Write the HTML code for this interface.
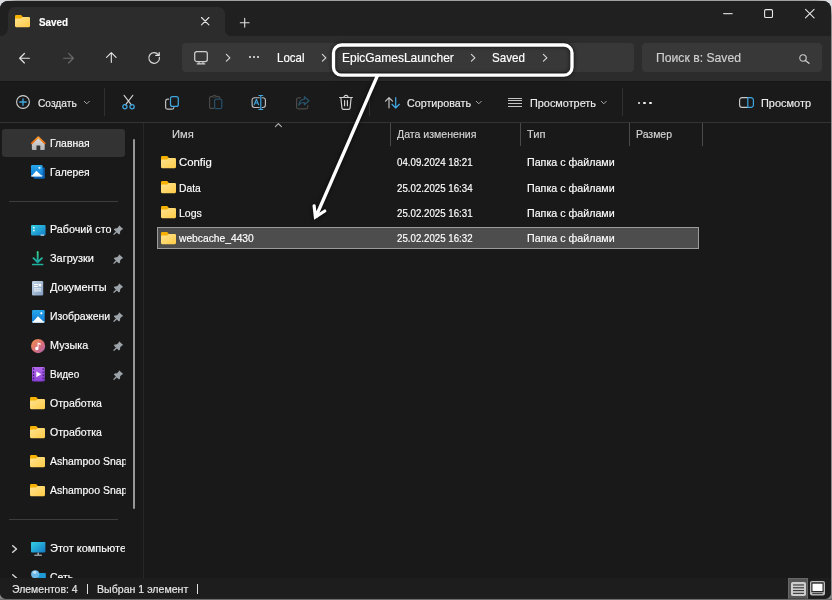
<!DOCTYPE html>
<html lang="ru">
<head>
<meta charset="utf-8">
<title>Saved</title>
<style>
*{margin:0;padding:0;box-sizing:border-box}
html,body{width:832px;height:600px;overflow:hidden;background:#8c8c8c}
body{font-family:"Liberation Sans",sans-serif;font-size:12px;color:#fff;position:relative}
#bg{position:absolute;left:0;top:0;width:832px;height:600px;background:radial-gradient(circle at 0 0,#dcdee1 0,#dcdee1 5px,rgba(220,222,225,0) 16px),radial-gradient(circle at 832px 0,#dcdee1 0,#dcdee1 5px,rgba(220,222,225,0) 16px),linear-gradient(#a0a0a0,#a0a0a0 1px,#8a8a8a 2px,#8a8a8a 598px,#6c6c6c 599px)}
#win{position:absolute;left:0;top:0;width:831px;height:599px;background:#191919;clip-path:inset(1px 0 0.200px 0 round 8px 8px 6px 6px)}
#titlebar{position:absolute;left:0;top:0;width:832px;height:36px;background:#202020}
#tab{position:absolute;left:7.700px;top:7.400px;width:217px;height:28.600px;background:#2c2c2c;border-radius:7px 7px 0 0}
#navrow{position:absolute;left:0;top:36px;width:832px;height:44.500px;background:#2c2c2c}
#addr{position:absolute;left:181.800px;top:43.300px;width:452.200px;height:29px;background:#383838;border-radius:4px}
#search{position:absolute;left:642px;top:43.300px;width:179.700px;height:29px;background:#383838;border-radius:4px}
#cmdbar{position:absolute;left:0;top:80.500px;width:832px;height:42px;background:#1a1a1a;border-top:1px solid #171717}
#hline{position:absolute;left:0;top:122px;width:832px;height:1px;background:#333}
#status{position:absolute;left:0;top:578.400px;width:832px;height:21px;background:#1d1d1d;z-index:5}
#navsel{position:absolute;left:2px;top:129px;width:123.300px;height:28px;background:#333;border-radius:3px}
#rowsel{position:absolute;left:157px;top:227px;width:542px;height:22px;background:#4d4d4d;border:1px solid #9b9b9b}
.t{position:absolute;white-space:nowrap;line-height:16px;height:16px;transform-origin:0 0;-webkit-text-stroke:0.180px}
.sep{position:absolute;width:1px;background:#303030}
.b{position:absolute}
svg{position:absolute;overflow:visible}
</style>
</head>
<body>
<div id="bg"></div>
<div id="win">
<div id="titlebar"></div>
<div id="tab"></div>
<svg style="left:0;top:28px" width="8" height="8" viewBox="0 0 8 8"><path d="M8 0v8H0a8 8 0 0 0 8-8z" fill="#2c2c2c"/></svg>
<svg style="left:225px;top:30px" width="6" height="6" viewBox="0 0 6 6"><path d="M0 0v6h6a6 6 0 0 1-6-6z" fill="#2c2c2c"/></svg>
<div id="navrow"></div>
<div id="addr"></div>
<div id="search"></div>
<div id="cmdbar"></div>
<div id="hline"></div>
<div id="navsel"></div>
<div id="rowsel"></div>
<div id="status"></div>
<div class="sep" style="left:104px;top:88px;height:28px"></div>
<div class="sep" style="left:369px;top:88px;height:28px"></div>
<div class="sep" style="left:622px;top:88px;height:28px"></div>
<div class="sep" style="left:390px;top:123px;height:23px;background:#4a4a4a"></div>
<div class="sep" style="left:520px;top:123px;height:23px;background:#4a4a4a"></div>
<div class="sep" style="left:629px;top:123px;height:23px;background:#4a4a4a"></div>
<div class="sep" style="left:702px;top:123px;height:23px;background:#4a4a4a"></div>
<div class="b" style="left:142.600px;top:123px;width:1.400px;height:456px;background:#272727"></div>
<div class="b" style="left:9px;top:201px;width:109px;height:1px;background:#3d3d3d"></div>
<div class="b" style="left:9px;top:519px;width:109px;height:1px;background:#3d3d3d"></div>
<div class="b" style="left:133px;top:139px;width:2.300px;height:369.500px;background:#969696;border-radius:1px"></div>
<div class="t" style="left:39.00px;top:13.50px;font-size:11.75px;transform:scaleX(0.8375);color:#fff;font-weight:bold;">Saved</div>
<div class="t" style="left:276.75px;top:50.00px;font-size:12.75px;transform:scaleX(0.9016);color:#fff;">Local</div>
<div class="t" style="left:342.20px;top:50.00px;font-size:12.75px;transform:scaleX(0.9390);color:#fff;">EpicGamesLauncher</div>
<div class="t" style="left:491.50px;top:50.00px;font-size:12.75px;transform:scaleX(0.9080);color:#fff;">Saved</div>
<div class="t" style="left:655.75px;top:50.00px;font-size:12.75px;transform:scaleX(0.9564);color:#cfcfcf;">Поиск в: Saved</div>
<div class="t" style="left:38.00px;top:95.00px;font-size:11.75px;transform:scaleX(0.8671);color:#ececec;">Создать</div>
<div class="t" style="left:406.50px;top:95.00px;font-size:11.75px;transform:scaleX(0.9118);color:#ececec;">Сортировать</div>
<div class="t" style="left:529.50px;top:95.00px;font-size:11.75px;transform:scaleX(0.9255);color:#ececec;">Просмотреть</div>
<div class="t" style="left:760.75px;top:95.00px;font-size:11.75px;transform:scaleX(0.9313);color:#ececec;">Просмотр</div>
<div class="t" style="left:172.00px;top:126.00px;font-size:11.75px;transform:scaleX(0.9508);color:#d4d4d4;">Имя</div>
<div class="t" style="left:396.50px;top:126.00px;font-size:11.75px;transform:scaleX(0.8991);color:#d4d4d4;">Дата изменения</div>
<div class="t" style="left:527.20px;top:126.00px;font-size:11.75px;transform:scaleX(0.9457);color:#d4d4d4;">Тип</div>
<div class="t" style="left:635.75px;top:126.00px;font-size:11.75px;transform:scaleX(0.8916);color:#d4d4d4;">Размер</div>
<div class="t" style="left:179.00px;top:154.00px;font-size:11.75px;transform:scaleX(0.9665);color:#fff;">Config</div>
<div class="t" style="left:396.50px;top:154.00px;font-size:11.75px;transform:scaleX(0.8262);color:#fff;">04.09.2024 18:21</div>
<div class="t" style="left:527.20px;top:154.00px;font-size:11.75px;transform:scaleX(0.9088);color:#fff;">Папка с файлами</div>
<div class="t" style="left:179.00px;top:180.00px;font-size:11.75px;transform:scaleX(0.8764);color:#fff;">Data</div>
<div class="t" style="left:396.50px;top:180.00px;font-size:11.75px;transform:scaleX(0.8262);color:#fff;">25.02.2025 16:34</div>
<div class="t" style="left:527.20px;top:180.00px;font-size:11.75px;transform:scaleX(0.9088);color:#fff;">Папка с файлами</div>
<div class="t" style="left:179.00px;top:205.00px;font-size:11.75px;transform:scaleX(0.8980);color:#fff;">Logs</div>
<div class="t" style="left:396.50px;top:205.00px;font-size:11.75px;transform:scaleX(0.8262);color:#fff;">25.02.2025 16:31</div>
<div class="t" style="left:527.20px;top:205.00px;font-size:11.75px;transform:scaleX(0.9088);color:#fff;">Папка с файлами</div>
<div class="t" style="left:179.05px;top:230.00px;font-size:11.75px;transform:scaleX(0.8736);color:#fff;">webcache_4430</div>
<div class="t" style="left:396.50px;top:230.00px;font-size:11.75px;transform:scaleX(0.8262);color:#fff;">25.02.2025 16:32</div>
<div class="t" style="left:527.20px;top:230.00px;font-size:11.75px;transform:scaleX(0.9088);color:#fff;">Папка с файлами</div>
<div class="t" style="left:50.00px;top:134.60px;font-size:11.75px;transform:scaleX(0.8849);color:#fff;">Главная</div>
<div class="t" style="left:50.00px;top:163.60px;font-size:11.75px;transform:scaleX(0.8788);color:#fff;">Галерея</div>
<div class="t" style="left:50.00px;top:220.60px;font-size:11.75px;transform:scaleX(0.9153);color:#fff;width:67.73px;overflow:hidden;">Рабочий сто</div>
<div class="t" style="left:50.00px;top:249.60px;font-size:11.75px;transform:scaleX(0.9300);color:#fff;">Загрузки</div>
<div class="t" style="left:50.00px;top:278.60px;font-size:11.75px;transform:scaleX(0.9329);color:#fff;">Документы</div>
<div class="t" style="left:50.00px;top:307.60px;font-size:11.75px;transform:scaleX(0.8900);color:#fff;width:69.10px;overflow:hidden;">Изображени</div>
<div class="t" style="left:50.00px;top:336.60px;font-size:11.75px;transform:scaleX(0.9203);color:#fff;">Музыка</div>
<div class="t" style="left:50.00px;top:365.60px;font-size:11.75px;transform:scaleX(0.8525);color:#fff;">Видео</div>
<div class="t" style="left:50.00px;top:394.60px;font-size:11.75px;transform:scaleX(0.8975);color:#fff;">Отработка</div>
<div class="t" style="left:50.00px;top:423.60px;font-size:11.75px;transform:scaleX(0.8975);color:#fff;">Отработка</div>
<div class="t" style="left:50.00px;top:452.60px;font-size:11.75px;transform:scaleX(0.8900);color:#fff;width:84.94px;overflow:hidden;">Ashampoo Snap</div>
<div class="t" style="left:50.00px;top:481.60px;font-size:11.75px;transform:scaleX(0.8900);color:#fff;width:84.94px;overflow:hidden;">Ashampoo Snap</div>
<div class="t" style="left:50.00px;top:539.60px;font-size:11.75px;transform:scaleX(0.9350);color:#fff;width:80.21px;overflow:hidden;">Этот компьюте</div>
<div class="t" style="left:50.00px;top:568.60px;font-size:11.75px;transform:scaleX(0.8900);color:#fff;">Сеть</div>
<div class="t" style="left:12.40px;top:581.00px;font-size:11.75px;transform:scaleX(0.8910);color:#e8e8e8;z-index:6;">Элементов: 4</div>
<div class="t" style="left:97.00px;top:581.00px;font-size:11.75px;transform:scaleX(0.9017);color:#e8e8e8;z-index:6;">Выбран 1 элемент</div>
<div class="b" style="left:87px;top:584px;width:1px;height:10px;background:#e0e0e0;z-index:6"></div>
<div class="b" style="left:197px;top:584px;width:1px;height:10px;background:#e0e0e0;z-index:6"></div>
<svg width="0" height="0" style="left:0;top:0"><defs>
<linearGradient id="fg" x1="0" y1="0" x2="1" y2="1"><stop offset="0" stop-color="#ffe392"/><stop offset="1" stop-color="#ffcb45"/></linearGradient>
<linearGradient id="mon" x1="0" y1="0" x2="1" y2="1"><stop offset="0" stop-color="#35d0e6"/><stop offset="1" stop-color="#1279c4"/></linearGradient>
<linearGradient id="mus" x1="0" y1="0" x2="1" y2="1"><stop offset="0" stop-color="#f0914a"/><stop offset="0.55" stop-color="#d96f78"/><stop offset="1" stop-color="#a464b4"/></linearGradient>
<linearGradient id="vid" x1="0" y1="0" x2="0" y2="1"><stop offset="0" stop-color="#b468ee"/><stop offset="1" stop-color="#8a3fd6"/></linearGradient>
<linearGradient id="pic" x1="0" y1="0" x2="0" y2="1"><stop offset="0" stop-color="#28a8ea"/><stop offset="1" stop-color="#0f78d4"/></linearGradient>
<linearGradient id="doc" x1="0" y1="0" x2="1" y2="1"><stop offset="0" stop-color="#c9d6e6"/><stop offset="1" stop-color="#7f9cc0"/></linearGradient>
<linearGradient id="dl" gradientUnits="userSpaceOnUse" x1="0" y1="0" x2="0" y2="12"><stop offset="0" stop-color="#3ad585"/><stop offset="1" stop-color="#169fa6"/></linearGradient>
<linearGradient id="roof" x1="0" y1="0" x2="0" y2="1"><stop offset="0" stop-color="#ff9a2e"/><stop offset="1" stop-color="#e8690a"/></linearGradient>
<linearGradient id="hs" x1="0" y1="0" x2="0" y2="1"><stop offset="0" stop-color="#dcdcdc"/><stop offset="1" stop-color="#b4b4b4"/></linearGradient>
</defs></svg>
<svg style="left:15px;top:15.2px" width="15" height="12.2" viewBox="0 0 15 12.5" preserveAspectRatio="none"><path d="M0 1.2A1.2 1.2 0 0 1 1.2 0H5.6c.5 0 .9.2 1.2.6L8 2.2V5H0z" fill="#f6b100"/><path d="M0 4.6a1 1 0 0 1 1-1H5.4c.5 0 .9-.2 1.2-.6l.5-.5c.3-.3.7-.5 1.2-.5H13.9A1.1 1.1 0 0 1 15 3.1v8.3a1.1 1.1 0 0 1-1.1 1.1H1.1A1.1 1.1 0 0 1 0 11.400z" fill="url(#fg)"/></svg>
<svg style="left:161px;top:155.5px" width="15" height="12.2" viewBox="0 0 15 12.5" preserveAspectRatio="none"><path d="M0 1.2A1.2 1.2 0 0 1 1.2 0H5.6c.5 0 .9.2 1.2.6L8 2.2V5H0z" fill="#f6b100"/><path d="M0 4.6a1 1 0 0 1 1-1H5.4c.5 0 .9-.2 1.2-.6l.5-.5c.3-.3.7-.5 1.2-.5H13.9A1.1 1.1 0 0 1 15 3.1v8.3a1.1 1.1 0 0 1-1.1 1.1H1.1A1.1 1.1 0 0 1 0 11.400z" fill="url(#fg)"/></svg>
<svg style="left:161px;top:180.9px" width="15" height="12.2" viewBox="0 0 15 12.5" preserveAspectRatio="none"><path d="M0 1.2A1.2 1.2 0 0 1 1.2 0H5.6c.5 0 .9.2 1.2.6L8 2.2V5H0z" fill="#f6b100"/><path d="M0 4.6a1 1 0 0 1 1-1H5.4c.5 0 .9-.2 1.2-.6l.5-.5c.3-.3.7-.5 1.2-.5H13.9A1.1 1.1 0 0 1 15 3.1v8.3a1.1 1.1 0 0 1-1.1 1.1H1.1A1.1 1.1 0 0 1 0 11.400z" fill="url(#fg)"/></svg>
<svg style="left:161px;top:206.3px" width="15" height="12.2" viewBox="0 0 15 12.5" preserveAspectRatio="none"><path d="M0 1.2A1.2 1.2 0 0 1 1.2 0H5.6c.5 0 .9.2 1.2.6L8 2.2V5H0z" fill="#f6b100"/><path d="M0 4.6a1 1 0 0 1 1-1H5.4c.5 0 .9-.2 1.2-.6l.5-.5c.3-.3.7-.5 1.2-.5H13.9A1.1 1.1 0 0 1 15 3.1v8.3a1.1 1.1 0 0 1-1.1 1.1H1.1A1.1 1.1 0 0 1 0 11.400z" fill="url(#fg)"/></svg>
<svg style="left:161px;top:231.7px" width="15" height="12.2" viewBox="0 0 15 12.5" preserveAspectRatio="none"><path d="M0 1.2A1.2 1.2 0 0 1 1.2 0H5.6c.5 0 .9.2 1.2.6L8 2.2V5H0z" fill="#f6b100"/><path d="M0 4.6a1 1 0 0 1 1-1H5.4c.5 0 .9-.2 1.2-.6l.5-.5c.3-.3.7-.5 1.2-.5H13.9A1.1 1.1 0 0 1 15 3.1v8.3a1.1 1.1 0 0 1-1.1 1.1H1.1A1.1 1.1 0 0 1 0 11.400z" fill="url(#fg)"/></svg>
<svg style="left:30.4px;top:397.2px" width="15" height="12.2" viewBox="0 0 15 12.5" preserveAspectRatio="none"><path d="M0 1.2A1.2 1.2 0 0 1 1.2 0H5.6c.5 0 .9.2 1.2.6L8 2.2V5H0z" fill="#f6b100"/><path d="M0 4.6a1 1 0 0 1 1-1H5.4c.5 0 .9-.2 1.2-.6l.5-.5c.3-.3.7-.5 1.2-.5H13.9A1.1 1.1 0 0 1 15 3.1v8.3a1.1 1.1 0 0 1-1.1 1.1H1.1A1.1 1.1 0 0 1 0 11.400z" fill="url(#fg)"/></svg>
<svg style="left:30.4px;top:426.2px" width="15" height="12.2" viewBox="0 0 15 12.5" preserveAspectRatio="none"><path d="M0 1.2A1.2 1.2 0 0 1 1.2 0H5.6c.5 0 .9.2 1.2.6L8 2.2V5H0z" fill="#f6b100"/><path d="M0 4.6a1 1 0 0 1 1-1H5.4c.5 0 .9-.2 1.2-.6l.5-.5c.3-.3.7-.5 1.2-.5H13.9A1.1 1.1 0 0 1 15 3.1v8.3a1.1 1.1 0 0 1-1.1 1.1H1.1A1.1 1.1 0 0 1 0 11.400z" fill="url(#fg)"/></svg>
<svg style="left:30.4px;top:455.2px" width="15" height="12.2" viewBox="0 0 15 12.5" preserveAspectRatio="none"><path d="M0 1.2A1.2 1.2 0 0 1 1.2 0H5.6c.5 0 .9.2 1.2.6L8 2.2V5H0z" fill="#f6b100"/><path d="M0 4.6a1 1 0 0 1 1-1H5.4c.5 0 .9-.2 1.2-.6l.5-.5c.3-.3.7-.5 1.2-.5H13.9A1.1 1.1 0 0 1 15 3.1v8.3a1.1 1.1 0 0 1-1.1 1.1H1.1A1.1 1.1 0 0 1 0 11.400z" fill="url(#fg)"/></svg>
<svg style="left:30.4px;top:484.2px" width="15" height="12.2" viewBox="0 0 15 12.5" preserveAspectRatio="none"><path d="M0 1.2A1.2 1.2 0 0 1 1.2 0H5.6c.5 0 .9.2 1.2.6L8 2.2V5H0z" fill="#f6b100"/><path d="M0 4.6a1 1 0 0 1 1-1H5.4c.5 0 .9-.2 1.2-.6l.5-.5c.3-.3.7-.5 1.2-.5H13.9A1.1 1.1 0 0 1 15 3.1v8.3a1.1 1.1 0 0 1-1.1 1.1H1.1A1.1 1.1 0 0 1 0 11.400z" fill="url(#fg)"/></svg>
<svg style="left:201px;top:17.1px" width="8.4" height="8.4" viewBox="0 0 8.4 8.4" ><path d="M0.500 .5l7.400 7.400M7.900 .5l-7.400 7.400" fill="none" stroke-linecap="round" stroke-linejoin="round" stroke="#e6e6e6" stroke-width="1.1"/></svg>
<svg style="left:240.3px;top:17.5px" width="9.4" height="9.4" viewBox="0 0 9.4 9.4" ><path d="M4.700 .3v8.800M.3 4.700h8.800" fill="none" stroke-linecap="round" stroke-linejoin="round" stroke="#e0e0e0" stroke-width="1.1"/></svg>
<svg style="left:723px;top:13.3px" width="10" height="1.2" viewBox="0 0 10 1.2" ><rect width="9.800" height="1.200" rx=".5" fill="#cdcdcd"/></svg>
<svg style="left:763.5px;top:9px" width="10" height="10" viewBox="0 0 10 10" ><rect x=".6" y=".6" width="7.900" height="7.900" rx="1.3" fill="none" stroke="#e8e8e8" stroke-width="1.1"/></svg>
<svg style="left:805.2px;top:9px" width="10" height="10" viewBox="0 0 10 10" ><path d="M0.500 .3l8.600 8.600M9.100 .3l-8.600 8.600" fill="none" stroke-linecap="round" stroke-linejoin="round" stroke="#e8e8e8" stroke-width="1.05"/></svg>
<svg style="left:18.9px;top:52.5px" width="11" height="11" viewBox="0 0 12 12" ><path d="M0.700 5.700h10.600M5.900 .5L.7 5.700l5.200 5.200" fill="none" stroke-linecap="round" stroke-linejoin="round" stroke="#e2e2e2" stroke-width="1.3"/></svg>
<svg style="left:62.5px;top:52.5px" width="11" height="11" viewBox="0 0 12 12" ><path d="M11.300 5.700H.7M6.100 .5l5.200 5.200-5.200 5.200" fill="none" stroke-linecap="round" stroke-linejoin="round" stroke="#6b6b6b" stroke-width="1.25"/></svg>
<svg style="left:105.8px;top:52.4px" width="11" height="11" viewBox="0 0 12 12" ><path d="M5.800 11.300V.7M.6 5.900L5.800 .7l5.200 5.200" fill="none" stroke-linecap="round" stroke-linejoin="round" stroke="#e2e2e2" stroke-width="1.25"/></svg>
<svg style="left:148.2px;top:52px" width="12" height="12" viewBox="0 0 12 12" ><path d="M11.400 5.300A5.300 5.300 0 1 1 10.300 2.700" fill="none" stroke-linecap="round" stroke-linejoin="round" stroke="#dadada" stroke-width="1.2"/><path d="M11.200 .6V3.400H7.800" fill="none" stroke-linecap="round" stroke-linejoin="round" stroke="#e6e6e6" stroke-width="1.25"/></svg>
<svg style="left:194px;top:50.5px" width="14" height="13.5" viewBox="0 0 14 13.5" ><rect x=".7" y=".7" width="12.600" height="9.800" rx="2" fill="none" stroke-linecap="round" stroke-linejoin="round" stroke="#cfcfcf" stroke-width="1.25"/><path d="M5 10.600v2M9 10.600v2M3.200 12.900h7.600" fill="none" stroke-linecap="round" stroke-linejoin="round" stroke="#cfcfcf" stroke-width="1.1"/></svg>
<svg style="left:226.10000000000002px;top:54.2px" width="4.4" height="7.6" viewBox="0 0 4.4 7.6" ><path d="M.4 .4l3.500 3.400L.4 7.200" fill="none" stroke-linecap="round" stroke-linejoin="round" stroke="#d6d6d6" stroke-width="1.15"/></svg>
<svg style="left:321.5px;top:54.2px" width="4.4" height="7.6" viewBox="0 0 4.4 7.6" ><path d="M.4 .4l3.500 3.400L.4 7.200" fill="none" stroke-linecap="round" stroke-linejoin="round" stroke="#d6d6d6" stroke-width="1.15"/></svg>
<svg style="left:470.7px;top:54.2px" width="4.4" height="7.6" viewBox="0 0 4.4 7.6" ><path d="M.4 .4l3.500 3.400L.4 7.200" fill="none" stroke-linecap="round" stroke-linejoin="round" stroke="#d6d6d6" stroke-width="1.15"/></svg>
<svg style="left:542.9px;top:54.2px" width="4.4" height="7.6" viewBox="0 0 4.4 7.6" ><path d="M.4 .4l3.500 3.400L.4 7.200" fill="none" stroke-linecap="round" stroke-linejoin="round" stroke="#d6d6d6" stroke-width="1.15"/></svg>
<div class="b" style="left:249.2px;top:56.200px;width:2.100px;height:2.100px;border-radius:1.100px;background:#ededed"></div>
<div class="b" style="left:253.29999999999998px;top:56.200px;width:2.100px;height:2.100px;border-radius:1.100px;background:#ededed"></div>
<div class="b" style="left:257.4px;top:56.200px;width:2.100px;height:2.100px;border-radius:1.100px;background:#ededed"></div>
<svg style="left:798.5px;top:53.5px" width="11" height="10" viewBox="0 0 11 10" ><circle cx="4" cy="4" r="3.200" fill="none" stroke-linecap="round" stroke-linejoin="round" stroke="#d0d0d0" stroke-width="1.1"/><path d="M6.400 6.400l3.600 2.900" fill="none" stroke-linecap="round" stroke-linejoin="round" stroke="#d0d0d0" stroke-width="1.3"/></svg>
<svg style="left:16px;top:95px" width="14" height="14" viewBox="0 0 14 14" ><circle cx="7" cy="7" r="6.400" fill="none" stroke-linecap="round" stroke-linejoin="round" stroke="#d2d2d2" stroke-width="1.1"/><path d="M7 3.800v6.400M3.800 7h6.400" fill="none" stroke-linecap="round" stroke-linejoin="round" stroke="#3fa6df" stroke-width="1.35"/></svg>
<svg style="left:83.5px;top:100.8px" width="5.6" height="3.2" viewBox="0 0 5.6 3.2" ><path d="M.3 .3l2.500 2.500L5.300 .3" fill="none" stroke-linecap="round" stroke-linejoin="round" stroke="#a8a8a8" stroke-width="1"/></svg>
<svg style="left:476.2px;top:100.8px" width="5.6" height="3.2" viewBox="0 0 5.6 3.2" ><path d="M.3 .3l2.500 2.500L5.300 .3" fill="none" stroke-linecap="round" stroke-linejoin="round" stroke="#a8a8a8" stroke-width="1"/></svg>
<svg style="left:601.2px;top:100.8px" width="5.6" height="3.2" viewBox="0 0 5.6 3.2" ><path d="M.3 .3l2.500 2.500L5.300 .3" fill="none" stroke-linecap="round" stroke-linejoin="round" stroke="#a8a8a8" stroke-width="1"/></svg>
<svg style="left:122px;top:95px" width="13" height="15" viewBox="0 0 13 15" ><path d="M2.100 .3l7.300 9.500M10.800 .3L3.500 9.800" fill="none" stroke-linecap="round" stroke-linejoin="round" stroke="#d2d2d2" stroke-width="1.1"/><circle cx="2.900" cy="11.800" r="2.100" fill="none" stroke-linecap="round" stroke-linejoin="round" stroke="#3fa6df" stroke-width="1.25"/><circle cx="10.100" cy="11.800" r="2.100" fill="none" stroke-linecap="round" stroke-linejoin="round" stroke="#3fa6df" stroke-width="1.25"/></svg>
<svg style="left:165px;top:95.5px" width="14" height="14" viewBox="0 0 14 14" ><path d="M3.600 3.200H2.500A2 2 0 0 0 .6 5.200v6A2 2 0 0 0 2.600 13.200h4.300a2 2 0 0 0 2-1.700" fill="none" stroke-linecap="round" stroke-linejoin="round" stroke="#bdbdbd" stroke-width="1.2"/><rect x="5.500" y=".6" width="7.800" height="9.800" rx="2" fill="none" stroke-linecap="round" stroke-linejoin="round" stroke="#3fa6df" stroke-width="1.25"/></svg>
<svg style="left:209px;top:95px" width="14" height="14.5" viewBox="0 0 14 14.5" ><path d="M4.800 13.400H2A1.400 1.400 0 0 1 .6 12V3A1.400 1.400 0 0 1 2 1.600h1.500M7.500 1.600H9.400A1.400 1.400 0 0 1 10.800 3v.6" fill="none" stroke-linecap="round" stroke-linejoin="round" stroke="#4b4b4b" stroke-width="1.1"/><ellipse cx="5.500" cy="1.300" rx="2.100" ry=".9" fill="none" stroke-linecap="round" stroke-linejoin="round" stroke="#4b4b4b" stroke-width="1"/><rect x="5.600" y="4.100" width="7.200" height="9.600" rx="1.800" fill="none" stroke-linecap="round" stroke-linejoin="round" stroke="#24506a" stroke-width="1.25"/></svg>
<svg style="left:251px;top:95px" width="16" height="15" viewBox="0 0 16 15" ><path d="M8.300 2.700H3.500A2.400 2.400 0 0 0 1.100 5.100v5A2.400 2.400 0 0 0 3.500 12.500h4.800M11.300 2.700h.7A2.400 2.400 0 0 1 14.400 5.100v5a2.400 2.400 0 0 1-2.400 2.400h-.7" fill="none" stroke-linecap="round" stroke-linejoin="round" stroke="#bdbdbd" stroke-width="1.15"/><path d="M9.800 .5v14M7.900 .5h3.800M7.900 14.500h3.800" fill="none" stroke-linecap="round" stroke-linejoin="round" stroke="#3fa6df" stroke-width="1.2"/><path d="M3.200 9.700L5.400 4.300l2.200 5.400M4 8h2.800" fill="none" stroke-linecap="round" stroke-linejoin="round" stroke="#3fa6df" stroke-width="1.1"/></svg>
<svg style="left:296px;top:95.5px" width="14" height="14" viewBox="0 0 14 14" ><path d="M4.500 1.900H2.400A1.800 1.800 0 0 0 .6 3.700v7.400a1.800 1.800 0 0 0 1.800 1.800h7.600a1.800 1.800 0 0 0 1.800-1.800V9.600" fill="none" stroke-linecap="round" stroke-linejoin="round" stroke="#4b4b4b" stroke-width="1.15"/><path d="M8.400 .8l4.500 4-4.500 4V6.500C5.700 6.400 4 7.200 2.800 9.200 3.200 5.700 5 3.500 8.400 3.200z" fill="none" stroke-linecap="round" stroke-linejoin="round" stroke="#28566f" stroke-width="1.15"/></svg>
<svg style="left:339px;top:95px" width="14" height="15" viewBox="0 0 14 15" ><path d="M.6 2.500h12.800M5 2.300a2 2 0 0 1 4 0M1.900 2.700l1 10.200a1.500 1.500 0 0 0 1.500 1.400h5.200a1.500 1.500 0 0 0 1.500-1.400l1-10.200M5.600 5.600v5.200M8.400 5.600v5.200" fill="none" stroke-linecap="round" stroke-linejoin="round" stroke="#d2d2d2" stroke-width="1.15"/></svg>
<svg style="left:384.5px;top:96.5px" width="15" height="12" viewBox="0 0 15 12" ><path d="M4 10.800V.7M.5 4.200L4 .7l3.500 3.500" fill="none" stroke-linecap="round" stroke-linejoin="round" stroke="#c8c8c8" stroke-width="1.15"/><path d="M10.700 .7v10.300M7 7.300l3.700 3.700 3.700-3.700" fill="none" stroke-linecap="round" stroke-linejoin="round" stroke="#3fa6df" stroke-width="1.25"/></svg>
<div class="b" style="left:508px;top:97.7px;width:14.300px;height:1px;background:#c4c4c4"></div>
<div class="b" style="left:508px;top:100.4px;width:14.300px;height:1px;background:#c4c4c4"></div>
<div class="b" style="left:508px;top:103.1px;width:14.300px;height:1px;background:#c4c4c4"></div>
<div class="b" style="left:508px;top:105.8px;width:14.300px;height:1px;background:#c4c4c4"></div>
<div class="b" style="left:637.5px;top:101.900px;width:2.600px;height:2.600px;border-radius:1.300px;background:#f0f0f0"></div>
<div class="b" style="left:643.45px;top:101.900px;width:2.600px;height:2.600px;border-radius:1.300px;background:#f0f0f0"></div>
<div class="b" style="left:649.4px;top:101.900px;width:2.600px;height:2.600px;border-radius:1.300px;background:#f0f0f0"></div>
<svg style="left:738.5px;top:97px" width="15" height="11" viewBox="0 0 15 11" ><path d="M8.800 .6H3A2.400 2.400 0 0 0 .6 3v5A2.400 2.400 0 0 0 3 10.400h5.800" fill="none" stroke-linecap="round" stroke-linejoin="round" stroke="#c8c8c8" stroke-width="1.15"/><path d="M8.800 .6v9.800h3.200A2.400 2.400 0 0 0 14.400 8V3A2.400 2.400 0 0 0 12 .6z" fill="none" stroke-linecap="round" stroke-linejoin="round" stroke="#3fa6df" stroke-width="1.2"/></svg>
<svg style="left:275.1px;top:123px" width="6.8" height="4" viewBox="0 0 6.8 4" ><path d="M.4 3.700L3.400 .6l3 3.100" fill="none" stroke-linecap="round" stroke-linejoin="round" stroke="#b4b4b4" stroke-width="1.1"/></svg>
<svg style="left:30.5px;top:136px" width="15" height="14.5" viewBox="0 0 15 14.5" ><path d="M.9 7.200L7.300 1.200l6.400 6v6a.8 .8 0 0 1-.8 .8H9.300V9.500H5.500V14H1.700a.8 .8 0 0 1-.8-.8z" fill="url(#hs)"/><path d="M.7 7.300L7.300 1.100l6.600 6.200" fill="none" stroke="url(#roof)" stroke-width="1.700" stroke-linecap="round" stroke-linejoin="round"/></svg>
<svg style="left:31px;top:165.3px" width="14" height="14" viewBox="0 0 14 14" ><rect x="2.600" y="2.600" width="11.200" height="11.200" rx="1.200" fill="#0b60b0"/><rect x="0" y="0" width="11.600" height="11.600" rx="1.200" fill="url(#pic)"/><path d="M.4 11.200L5.400 5.800l5.800 5.400z" fill="#fff"/><rect x="7.600" y="2" width="1.800" height="1.800" rx=".4" fill="#fff"/><path d="M0 10.400h11.600v.4a.8 .8 0 0 1-.8 .8H.8a.8 .8 0 0 1-.8-.8z" fill="#dfefff"/></svg>
<svg style="left:30.6px;top:224.5px" width="14.6" height="10.8" viewBox="0 0 14.6 10.8" ><rect width="14.600" height="10.400" rx="1.100" fill="url(#mon)"/><rect x="2.100" y="1.900" width="1.500" height="1.500" fill="#f2fdff"/><rect x="2.100" y="4.700" width="1.500" height="1.600" fill="#f2fdff"/><rect x="9.600" y="9.500" width="3.600" height="1.300" rx=".3" fill="#b9d9ee"/></svg>
<svg style="left:32.3px;top:251.4px" width="11.4" height="14.4" viewBox="0 0 11.4 14.4" ><path d="M5.700 .9v10M1.500 7.200l4.200 4.100 4.200-4.100" fill="none" stroke="url(#dl)" stroke-width="1.900" stroke-linecap="round" stroke-linejoin="round"/><path d="M.8 13.500h9.800" stroke="#1fb59c" stroke-width="1.700" stroke-linecap="round"/></svg>
<svg style="left:32.3px;top:280.7px" width="11" height="14.4" viewBox="0 0 11 14.4" ><rect width="11.200" height="14.400" rx="1.200" fill="url(#doc)"/><rect x="2" y="3" width="3.800" height="1" fill="#fff"/><rect x="2" y="5" width="3.800" height="1" fill="#fff"/><rect x="6.600" y="2.800" width="2.600" height="2.600" fill="#fff"/><rect x="2" y="7.400" width="7.200" height="1" fill="#f2f6fb"/><rect x="2" y="9.400" width="7.200" height="1" fill="#f2f6fb"/></svg>
<svg style="left:31.7px;top:310.2px" width="12.7" height="12.7" viewBox="0 0 12.7 12.7" ><rect width="12.700" height="12.700" rx="1.300" fill="url(#pic)"/><path d="M.5 12.200L6 6.200l6.200 6z" fill="#fff"/><rect x="8.400" y="2.300" width="1.900" height="1.900" rx=".4" fill="#fff"/><path d="M0 11.400h12.700v.2a1.100 1.100 0 0 1-1.100 1.100H1.100A1.100 1.100 0 0 1 0 11.600z" fill="#e6f3ff"/></svg>
<svg style="left:30.5px;top:338.7px" width="14.2" height="14.2" viewBox="0 0 14.2 14.2" ><circle cx="7.100" cy="7.100" r="7.100" fill="url(#mus)"/><path d="M6.600 3.500l3.200 .9v1.400l-2.300-.6v4.300a1.700 1.700 0 1 1-1-1.500z" fill="#fff"/></svg>
<svg style="left:31.7px;top:367.2px" width="12.7" height="14.6" viewBox="0 0 12.7 14.6" ><rect width="12.700" height="14.600" rx="1.300" fill="url(#vid)"/><path d="M4.300 4.400l5 2.900-5 2.900z" fill="#fff"/><rect x=".9" y="1.3" width="1.200" height="1.500" fill="#3b1a70"/><rect x="10.600" y="1.3" width="1.200" height="1.500" fill="#3b1a70"/><rect x=".9" y="4.4" width="1.200" height="1.500" fill="#3b1a70"/><rect x="10.600" y="4.4" width="1.200" height="1.500" fill="#3b1a70"/><rect x=".9" y="7.5" width="1.200" height="1.500" fill="#3b1a70"/><rect x="10.600" y="7.5" width="1.200" height="1.500" fill="#3b1a70"/><rect x=".9" y="10.600000000000001" width="1.200" height="1.500" fill="#3b1a70"/><rect x="10.600" y="10.600000000000001" width="1.200" height="1.500" fill="#3b1a70"/><rect x=".9" y="13.700000000000001" width="1.200" height="1.500" fill="#3b1a70"/><rect x="10.600" y="13.700000000000001" width="1.200" height="1.500" fill="#3b1a70"/></svg>
<svg style="left:113.2px;top:225px" width="10.5" height="10" viewBox="0 0 10.5 10" ><path d="M6 .2l4.200 3.900-1.500 .6-1.500 1.600-.2 2.300-1 .9-2.200-2.100L1.100 10.100l-1-.9 2.800-2.800-2.100-2 .9-1 2.300-.2 1.600-1.500z" fill="#9da4a9"/></svg>
<svg style="left:113.2px;top:254px" width="10.5" height="10" viewBox="0 0 10.5 10" ><path d="M6 .2l4.200 3.900-1.500 .6-1.500 1.600-.2 2.300-1 .9-2.200-2.100L1.100 10.100l-1-.9 2.800-2.800-2.100-2 .9-1 2.300-.2 1.600-1.500z" fill="#9da4a9"/></svg>
<svg style="left:113.2px;top:283px" width="10.5" height="10" viewBox="0 0 10.5 10" ><path d="M6 .2l4.200 3.900-1.500 .6-1.500 1.600-.2 2.300-1 .9-2.200-2.100L1.100 10.100l-1-.9 2.800-2.800-2.100-2 .9-1 2.300-.2 1.600-1.500z" fill="#9da4a9"/></svg>
<svg style="left:113.2px;top:312px" width="10.5" height="10" viewBox="0 0 10.5 10" ><path d="M6 .2l4.200 3.900-1.500 .6-1.500 1.600-.2 2.300-1 .9-2.200-2.100L1.100 10.100l-1-.9 2.800-2.800-2.100-2 .9-1 2.300-.2 1.600-1.500z" fill="#9da4a9"/></svg>
<svg style="left:113.2px;top:341px" width="10.5" height="10" viewBox="0 0 10.5 10" ><path d="M6 .2l4.200 3.900-1.500 .6-1.500 1.600-.2 2.300-1 .9-2.200-2.100L1.100 10.100l-1-.9 2.800-2.800-2.100-2 .9-1 2.300-.2 1.600-1.500z" fill="#9da4a9"/></svg>
<svg style="left:113.2px;top:370px" width="10.5" height="10" viewBox="0 0 10.5 10" ><path d="M6 .2l4.200 3.900-1.500 .6-1.500 1.600-.2 2.300-1 .9-2.200-2.100L1.100 10.100l-1-.9 2.800-2.800-2.100-2 .9-1 2.300-.2 1.600-1.500z" fill="#9da4a9"/></svg>
<svg style="left:12px;top:544.8px" width="5.2" height="8" viewBox="0 0 5.2 8" ><path d="M.7 .7l3.800 3.300L.7 7.300" fill="none" stroke-linecap="round" stroke-linejoin="round" stroke="#d6d6d6" stroke-width="1.500"/></svg>
<svg style="left:30.8px;top:542px" width="14.4" height="14" viewBox="0 0 14.4 14" ><rect width="14.400" height="10.600" rx=".8" fill="url(#mon)"/><rect x="6.400" y="10.600" width="1.600" height="2.300" fill="#9aa4ad"/><rect x="3.300" y="12.700" width="7.600" height="1" fill="#c9d1d8"/></svg>
<svg style="left:12px;top:573.9px" width="5.2" height="8" viewBox="0 0 5.2 8" ><path d="M.7 .7l3.800 3.300L.7 7.300" fill="none" stroke-linecap="round" stroke-linejoin="round" stroke="#d6d6d6" stroke-width="1.500"/></svg>
<svg style="left:30.5px;top:570px" width="15" height="10" viewBox="0 0 15 10" ><rect x="6.500" y="3" width="8.300" height="7" rx=".6" fill="#1d9ad6"/><circle cx="4.200" cy="4.300" r="4.100" fill="#6cb8e6"/><path d="M1.500 2.500a3 3 0 0 1 3-1.800c1 .6 1.400 1.800 .5 2.700s-2.600 .4-3.500-.9z" fill="#bfe3f7"/></svg>
<div class="b" style="left:788px;top:578px;width:20px;height:21px;background:#565656;border:1px solid #686868;border-bottom:0;z-index:6"></div>
<svg style="left:791px;top:582px;z-index:6" width="15" height="14" viewBox="0 0 15 14" ><rect width="15" height="14" rx="1.800" fill="#cdcdcd"/><rect x="2" y="2.4" width="11" height="1.150" fill="#3a3a3a"/><rect x="2" y="5.199999999999999" width="11" height="1.150" fill="#3a3a3a"/><rect x="2" y="8.0" width="11" height="1.150" fill="#3a3a3a"/><rect x="2" y="10.799999999999999" width="11" height="1.150" fill="#3a3a3a"/></svg>
<svg style="left:810.2px;top:581px;z-index:6" width="15" height="14.6" viewBox="0 0 15 14.6" ><rect width="15" height="14.600" rx="2" fill="#bdbdbd"/><rect x="1.300" y="1.300" width="12.400" height="10" rx=".6" fill="#2a2a2a"/><rect x="2.500" y="2.700" width="10" height="7.300" fill="#fff"/><rect x="2.300" y="12.100" width="10.400" height="1" fill="#3a3a3a"/></svg>
<svg style="left:0;top:0;filter:drop-shadow(0 0 2px rgba(0,0,0,.75))" width="832" height="600" viewBox="0 0 832 600">
<rect x="333.500" y="45" width="238.500" height="30.200" rx="8" fill="none" stroke="#fff" stroke-width="3.300"/>
<path d="M377.500 75.500L315.600 217.500" fill="none" stroke="#fff" stroke-width="3.300" stroke-linecap="butt"/>
<path d="M314.100 205.800L315.400 217.100L324.800 211" fill="none" stroke="#fff" stroke-width="3.200" stroke-linecap="round" stroke-linejoin="miter"/>
<path d="M315.400 217.100L315 209.800L320.300 213.600z" fill="#fff"/>
</svg>
</div>
</body>
</html>
